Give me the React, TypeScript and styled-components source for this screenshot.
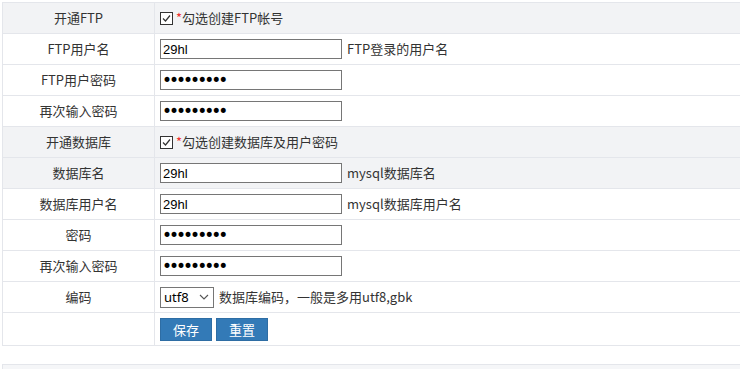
import React from "react";
import styled, { createGlobalStyle } from "styled-components";

const Global = createGlobalStyle`
  html, body { margin: 0; padding: 0; overflow: hidden; background: #fff; }
  body { font-family: "Microsoft YaHei", "Noto Sans CJK SC", "Noto Sans", sans-serif; font-size: 13px; color: #333; }
`;

const Page = styled.div`
  padding: 2px 0 0 2px;
  width: 760px;
`;

const Table = styled.table`
  border-collapse: collapse;
  width: 760px;
  border: 1px solid #e4e6eb;
`;

const Row = styled.tr<{ $shade?: boolean }>`
  background: ${(p) => (p.$shade ? "#f2f3f5" : "#fff")};
`;

const Label = styled.td<{ $h?: number }>`
  width: 151px;
  height: ${(p) => p.$h ?? 30}px;
  padding: 0;
  text-align: center;
  border: 1px solid #e4e6eb;
  font-size: 13px;
  color: #333;
  line-height: 16px;
`;

const Field = styled.td`
  padding: 0 0 0 5px;
  border: 1px solid #e4e6eb;
  vertical-align: middle;
`;

const Line = styled.div`
  display: flex;
  align-items: center;
  gap: 5px;
  font-size: 13px;
  color: #333;
  line-height: 16px;
`;

const Input = styled.input<{ $pw?: boolean }>`
  box-sizing: border-box;
  width: 182px;
  height: 20px;
  margin: 0;
  padding: 0 ${(p) => (p.$pw ? "0 0 1px" : "2px")};
  border: 1px solid #767676;
  font-family: ${(p) => (p.$pw ? '"DejaVu Sans", sans-serif' : '"Liberation Sans", Arial, sans-serif')};
  font-size: ${(p) => (p.$pw ? "17px" : "13px")};
  letter-spacing: ${(p) => (p.$pw ? "-3px" : "0")};
  color: #000;
  background: #fff;
  outline: none;
`;

const Check = styled.span`
  box-sizing: border-box;
  width: 13px;
  height: 13px;
  border: 1px solid #333;
  display: inline-flex;
  align-items: center;
  justify-content: center;
  background: #fff;
  margin-right: -2px;
`;

const Star = styled.span`
  color: #e33;
`;

const Select = styled.div`
  box-sizing: border-box;
  width: 54px;
  height: 21px;
  border: 1px solid #767676;
  display: flex;
  align-items: center;
  justify-content: space-between;
  padding: 0 4px 0 3px;
  font-family: "Noto Sans", sans-serif;
  font-size: 13px;
  color: #000;
  background: #fff;
`;

const Buttons = styled.div`
  display: flex;
  gap: 4px;
`;

const Button = styled.button`
  box-sizing: border-box;
  width: 52px;
  height: 23px;
  margin: 0;
  padding: 0;
  background: #337ab7;
  border: 1px solid #2e6da4;
  color: #fff;
  font-family: "Microsoft YaHei", "Noto Sans CJK SC", sans-serif;
  font-size: 13px;
  line-height: 21px;
`;

const Footer = styled.div`
  margin-top: 18px;
  height: 10px;
  border-top: 1px solid #e4e6eb;
  border-left: 1px solid #e4e6eb;
  background: #f5f6f8;
`;

const Checked = ({ text }: { text: string }) => (
  <Line>
    <Check>
      <svg width="11" height="11" viewBox="0 0 11 11">
        <path d="M2 5.5 L4.5 8 L9 2.5" fill="none" stroke="#333" strokeWidth="1.2" />
      </svg>
    </Check>
    <span>
      <Star>*</Star>
      {text}
    </span>
  </Line>
);

const TextRow = ({ label, value, hint, pw, shade }: { label: string; value: string; hint?: string; pw?: boolean; shade?: boolean }) => (
  <Row $shade={shade}>
    <Label>{label}</Label>
    <Field>
      <Line>
        <Input $pw={pw} type={pw ? "password" : "text"} defaultValue={value} readOnly />
        {hint && <span>{hint}</span>}
      </Line>
    </Field>
  </Row>
);

export default function App() {
  return (
    <>
      <Global />
      <Page>
        <Table>
          <tbody>
            <Row $shade>
              <Label>开通FTP</Label>
              <Field>
                <Checked text="勾选创建FTP帐号" />
              </Field>
            </Row>
            <TextRow label="FTP用户名" value="29hl" hint="FTP登录的用户名" />
            <TextRow label="FTP用户密码" value="12345678a" pw />
            <TextRow label="再次输入密码" value="12345678a" pw />
            <Row $shade>
              <Label>开通数据库</Label>
              <Field>
                <Checked text="勾选创建数据库及用户密码" />
              </Field>
            </Row>
            <TextRow label="数据库名" value="29hl" hint="mysql数据库名" shade />
            <TextRow label="数据库用户名" value="29hl" hint="mysql数据库用户名" />
            <TextRow label="密码" value="12345678a" pw />
            <TextRow label="再次输入密码" value="12345678a" pw />
            <Row>
              <Label>编码</Label>
              <Field>
                <Line>
                  <Select>
                    <span>utf8</span>
                    <svg width="10" height="6" viewBox="0 0 10 6">
                      <path d="M1 1 L5 5 L9 1" fill="none" stroke="#555" strokeWidth="1.1" />
                    </svg>
                  </Select>
                  <span>数据库编码，一般是多用utf8,gbk</span>
                </Line>
              </Field>
            </Row>
            <Row>
              <Label $h={32}></Label>
              <Field>
                <Buttons>
                  <Button>保存</Button>
                  <Button>重置</Button>
                </Buttons>
              </Field>
            </Row>
          </tbody>
        </Table>
        <Footer />
      </Page>
    </>
  );
}
